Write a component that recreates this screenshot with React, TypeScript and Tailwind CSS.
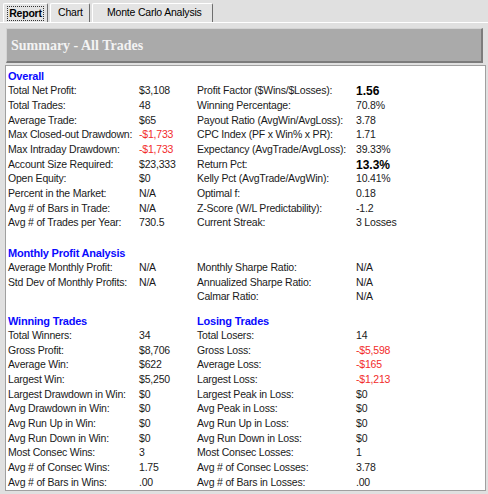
import React from "react";

type Cell = { text: string; red?: boolean; bold?: boolean };
type Row = [string, Cell | null, string, Cell | null];

const v = (text: string, opts: { red?: boolean; bold?: boolean } = {}): Cell => ({ text, ...opts });

const overall: Row[] = [
  ["Total Net Profit:", v("$3,108"), "Profit Factor ($Wins/$Losses):", v("1.56", { bold: true })],
  ["Total Trades:", v("48"), "Winning Percentage:", v("70.8%")],
  ["Average Trade:", v("$65"), "Payout Ratio (AvgWin/AvgLoss):", v("3.78")],
  ["Max Closed-out Drawdown:", v("-$1,733", { red: true }), "CPC Index (PF x Win% x PR):", v("1.71")],
  ["Max Intraday Drawdown:", v("-$1,733", { red: true }), "Expectancy (AvgTrade/AvgLoss):", v("39.33%")],
  ["Account Size Required:", v("$23,333"), "Return Pct:", v("13.3%", { bold: true })],
  ["Open Equity:", v("$0"), "Kelly Pct (AvgTrade/AvgWin):", v("10.41%")],
  ["Percent in the Market:", v("N/A"), "Optimal f:", v("0.18")],
  ["Avg # of Bars in Trade:", v("N/A"), "Z-Score (W/L Predictability):", v("-1.2")],
  ["Avg # of Trades per Year:", v("730.5"), "Current Streak:", v("3 Losses")],
];

const monthly: Row[] = [
  ["Average Monthly Profit:", v("N/A"), "Monthly Sharpe Ratio:", v("N/A")],
  ["Std Dev of Monthly Profits:", v("N/A"), "Annualized Sharpe Ratio:", v("N/A")],
  ["", null, "Calmar Ratio:", v("N/A")],
];

const trades: Row[] = [
  ["Total Winners:", v("34"), "Total Losers:", v("14")],
  ["Gross Profit:", v("$8,706"), "Gross Loss:", v("-$5,598", { red: true })],
  ["Average Win:", v("$622"), "Average Loss:", v("-$165", { red: true })],
  ["Largest Win:", v("$5,250"), "Largest Loss:", v("-$1,213", { red: true })],
  ["Largest Drawdown in Win:", v("$0"), "Largest Peak in Loss:", v("$0")],
  ["Avg Drawdown in Win:", v("$0"), "Avg Peak in Loss:", v("$0")],
  ["Avg Run Up in Win:", v("$0"), "Avg Run Up in Loss:", v("$0")],
  ["Avg Run Down in Win:", v("$0"), "Avg Run Down in Loss:", v("$0")],
  ["Most Consec Wins:", v("3"), "Most Consec Losses:", v("1")],
  ["Avg # of Consec Wins:", v("1.75"), "Avg # of Consec Losses:", v("3.78")],
  ["Avg # of Bars in Wins:", v(".00"), "Avg # of Bars in Losses:", v(".00")],
];

function Value({ cell }: { cell: Cell | null }) {
  if (!cell) return <span />;
  return (
    <span
      className={
        cell.bold
          ? "font-bold text-[12px] tracking-normal text-black"
          : cell.red
          ? "text-[#f22b2b]"
          : "text-[#1a1a1a]"
      }
    >
      {cell.text}
    </span>
  );
}

function Section({ left, right, rows, className }: { left: string; right?: string; rows: Row[]; className?: string }) {
  return (
    <div className={"grid grid-cols-[131px_58px_159px_1fr] " + (className ?? "")}>
      <div className="col-span-2 h-[15px] flex items-center font-bold text-[#0a0aff] text-[11px]">{left}</div>
      <div className="col-span-2 h-[15px] flex items-center font-bold text-[#0a0aff] text-[11px]">{right}</div>
      {rows.map((r, i) => (
        <React.Fragment key={i}>
          <div className="h-[14.67px] flex items-center whitespace-nowrap text-[#1a1a1a]">{r[0]}</div>
          <div className="h-[14.67px] flex items-center whitespace-nowrap">
            <Value cell={r[1]} />
          </div>
          <div className="h-[14.67px] flex items-center whitespace-nowrap text-[#1a1a1a]">{r[2]}</div>
          <div className="h-[14.67px] flex items-center whitespace-nowrap">
            <Value cell={r[3]} />
          </div>
        </React.Fragment>
      ))}
    </div>
  );
}

function Tab({ label, active, className }: { label: string; active?: boolean; className?: string }) {
  return (
    <div
      className={
        "h-[19px] flex items-center border-l border-t border-white border-r border-r-[#6e6e6e] rounded-t-[2px] bg-[#e4e4e4] " +
        (className ?? "")
      }
    >
      {active ? (
        <span className="font-bold border border-dotted border-[#333] px-[1px] leading-[13px]">{label}</span>
      ) : (
        <span>{label}</span>
      )}
    </div>
  );
}

export default function App() {
  return (
    <div className="w-[488px] h-[494px] bg-[#e0e0e0] font-['Liberation_Sans',sans-serif] text-[10.5px] tracking-[-0.2px] text-black overflow-hidden flex flex-col">
      <div className="flex items-end h-[22px] pl-[3px] gap-[2px]">
        <Tab label="Report" active className="w-[45px] justify-center" />
        <Tab label="Chart" className="w-[40px] pl-[7px]" />
        <Tab label="Monte Carlo Analysis" className="w-[121px] pl-[14px]" />
      </div>
      <div className="border-t border-white flex-1 flex flex-col px-[5px] pt-[5px]">
        <div className="h-[35px] ml-[1px] bg-[#aaaaaa] border-t border-l border-[#d4d4d4] border-b-2 border-r-2 border-b-[#7c7c7c] border-r-[#7c7c7c] flex items-center pl-[4px]">
          <span className="font-['Liberation_Serif',serif] font-bold text-[14px] tracking-normal text-[#f3f3f3]">Summary - All Trades</span>
        </div>
        <div className="mt-[2px] h-[426px] w-[481px] bg-white border border-[#a0a0a0] pl-[2px] pt-[3px]">
          <Section left="Overall" rows={overall} />
          <Section left="Monthly Profit Analysis" rows={monthly} className="mt-[15px]" />
          <Section left="Winning Trades" right="Losing Trades" rows={trades} className="mt-[9px]" />
        </div>
      </div>
    </div>
  );
}
